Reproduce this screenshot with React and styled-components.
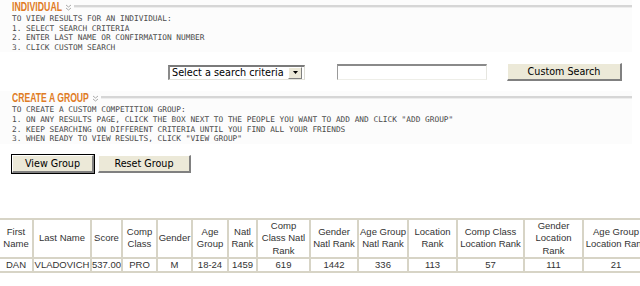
import React from "react";
import styled, { createGlobalStyle } from "styled-components";

const GlobalStyle = createGlobalStyle`
  html, body {
    margin: 0;
    padding: 0;
    background: #fff;
    overflow: hidden;
  }
  body {
    width: 640px;
    height: 286px;
    font-family: "Liberation Sans", Arial, sans-serif;
  }
`;

const Page = styled.div`
  width: 640px;
  display: flex;
  flex-direction: column;
`;

const Section = styled.section`
  width: 632px;
  background: #fcfcfc;
  padding: 0 0 0 12px;
  margin-top: ${(p) => p.$mt || 0}px;
  box-sizing: border-box;
`;

const Header = styled.div`
  display: flex;
  align-items: center;
  height: 14px;
`;

/* the title face is a heavy condensed grotesque: squeeze a bold sans to fit */
const TitleBox = styled.h2`
  margin: 0;
  flex: 0 0 auto;
  display: flex;
  align-items: center;
  width: ${(p) => p.$w}px;
  height: 14px;
  font-size: 12px;
  line-height: 14px;
  white-space: nowrap;
`;

const TitleText = styled.span`
  display: block;
  font-family: "Liberation Sans", Arial, sans-serif;
  font-weight: bold;
  font-size: 12.5px;
  line-height: 14px;
  color: #e07b24;
  transform: scaleX(${(p) => p.$sx});
  transform-origin: left center;
`;

const Rule = styled.div`
  flex: 1;
  height: 2px;
  margin-top: -2px;
  background: #d6d6d6;
  border-bottom: 1px solid #ededed;
`;

const Chevron = () => (
  <svg width="7" height="7" viewBox="0 0 7 7" style={{ margin: "0 2px 0 2px", flex: "0 0 auto" }}>
    <path d="M1 1 L3.5 3 L6 1 M1 4 L3.5 6 L6 4" fill="none" stroke="#aaa" strokeWidth="1" />
  </svg>
);

const Steps = styled.div`
  font-family: "DejaVu Sans Mono", "Liberation Mono", monospace;
  font-size: 7.8px;
  line-height: 9.6px;
  text-transform: uppercase;
  color: #4a4a4a;
  white-space: nowrap;
`;

const SearchRow = styled.div`
  display: flex;
  align-items: center;
  padding-left: 168px;
  margin-top: 11px;
  height: 18px;
`;

const SelectBox = styled.div`
  width: 137px;
  height: 15px;
  box-sizing: border-box;
  display: flex;
  align-items: center;
  background: #fff;
  border-top: 2px solid #7a7a7a;
  border-left: 2px solid #8a8a8a;
  border-right: 1px solid #dcdcd4;
  border-bottom: 1px solid #e4e4dc;
  font-family: "DejaVu Sans", Verdana, sans-serif;
  font-size: 9.7px;
  color: #000;
  padding-left: 2px;
`;

const SelectText = styled.span`
  flex: 1;
  white-space: nowrap;
`;

const ArrowButton = styled.span`
  width: 12px;
  height: 10px;
  margin-right: 2px;
  background: #ece9d8;
  border-top: 1px solid #fff;
  border-left: 1px solid #fff;
  border-right: 1px solid #808080;
  border-bottom: 1px solid #808080;
  display: flex;
  align-items: center;
  justify-content: center;
`;

const TextInput = styled.div`
  width: 150px;
  height: 16px;
  box-sizing: border-box;
  margin-left: 32px;
  background: #fff;
  border-top: 2px solid #8a8a8a;
  border-left: 1px solid #9a9a9a;
  border-right: 1px solid #e6e6e0;
  border-bottom: 1px solid #eeeee8;
`;

const Button = styled.button`
  height: 18px;
  width: ${(p) => p.$w}px;
  box-sizing: border-box;
  padding: 0;
  margin-left: ${(p) => p.$ml || 0}px;
  background: #ece9d8;
  font-family: "DejaVu Sans", Verdana, sans-serif;
  font-size: 9.6px;
  color: #000;
  border-top: 1px solid #fff;
  border-left: 1px solid #fff;
  border-right: 2px solid #808080;
  border-bottom: 2px solid #808080;
  outline: ${(p) => (p.$default ? "1px solid #000" : "none")};
  outline-offset: 0;
`;

const ButtonRow = styled.div`
  display: flex;
  align-items: center;
  padding-left: 12px;
  margin-top: 11px;
`;

const Results = styled.table`
  margin-top: 45px;
  margin-left: -2px;
  width: 650px;
  table-layout: fixed;
  border-collapse: collapse;
  font-family: "Liberation Sans", Arial, sans-serif;
  font-size: 9.5px;
  line-height: 12.4px;
  color: #333;
`;

const Th = styled.th`
  font-weight: normal;
  border: 2px solid #d7d4c6;
  padding: 0;
  height: 36px;
  text-align: center;
  vertical-align: middle;
  overflow: hidden;
`;

const Td = styled.td`
  border: 2px solid #d7d4c6;
  padding: 0;
  height: 11px;
  text-align: center;
  white-space: nowrap;
  overflow: hidden;
`;

const columns = [
  ["First Name", 34, "DAN"],
  ["Last Name", 58, "VLADOVICH"],
  ["Score", 31, "537.00"],
  ["Comp Class", 35, "PRO"],
  ["Gender", 35, "M"],
  ["Age Group", 36, "18-24"],
  ["Natl Rank", 29, "1459"],
  ["Comp Class Natl Rank", 53, "619"],
  ["Gender Natl Rank", 48, "1442"],
  ["Age Group Natl Rank", 50, "336"],
  ["Location Rank", 49, "113"],
  ["Comp Class Location Rank", 67, "57"],
  ["Gender Location Rank", 59, "111"],
  ["Age Group Location Rank", 66, "21"],
];

export default function App() {
  return (
    <Page>
      <GlobalStyle />
      <Section>
        <Header>
          <TitleBox $w={51}>
            <TitleText $sx={0.7}>INDIVIDUAL</TitleText>
          </TitleBox>
          <Chevron />
          <Rule />
        </Header>
        <Steps>
          <div>To view results for an individual:</div>
          <div>1. Select search criteria</div>
          <div>2. Enter last name or confirmation number</div>
          <div>3. Click custom search</div>
        </Steps>
      </Section>

      <SearchRow>
        <SelectBox>
          <SelectText>Select a search criteria</SelectText>
          <ArrowButton>
            <svg width="5" height="3" viewBox="0 0 5 3">
              <path d="M0 0 H5 L2.5 3 Z" fill="#000" />
            </svg>
          </ArrowButton>
        </SelectBox>
        <TextInput />
        <Button $w={115} $ml={20}>Custom Search</Button>
      </SearchRow>

      <Section $mt={10}>
        <Header>
          <TitleBox $w={78}>
            <TitleText $sx={0.69}>CREATE A GROUP</TitleText>
          </TitleBox>
          <Chevron />
          <Rule />
        </Header>
        <Steps>
          <div>To create a custom competition group:</div>
          <div>1. On any results page, click the box next to the people you want to add and click "add group"</div>
          <div>2. Keep searching on different criteria until you find all your friends</div>
          <div>3. When ready to view results, click "view group"</div>
        </Steps>
      </Section>

      <ButtonRow>
        <Button $w={82} $default>View Group</Button>
        <Button $w={93} $ml={4}>Reset Group</Button>
      </ButtonRow>

      <Results>
        <colgroup>
          {columns.map(([label, w]) => (
            <col key={label} style={{ width: w }} />
          ))}
        </colgroup>
        <thead>
          <tr>
            {columns.map(([label]) => (
              <Th key={label}>{label}</Th>
            ))}
          </tr>
        </thead>
        <tbody>
          <tr>
            {columns.map(([label, , value]) => (
              <Td key={label}>{value}</Td>
            ))}
          </tr>
        </tbody>
      </Results>
    </Page>
  );
}
